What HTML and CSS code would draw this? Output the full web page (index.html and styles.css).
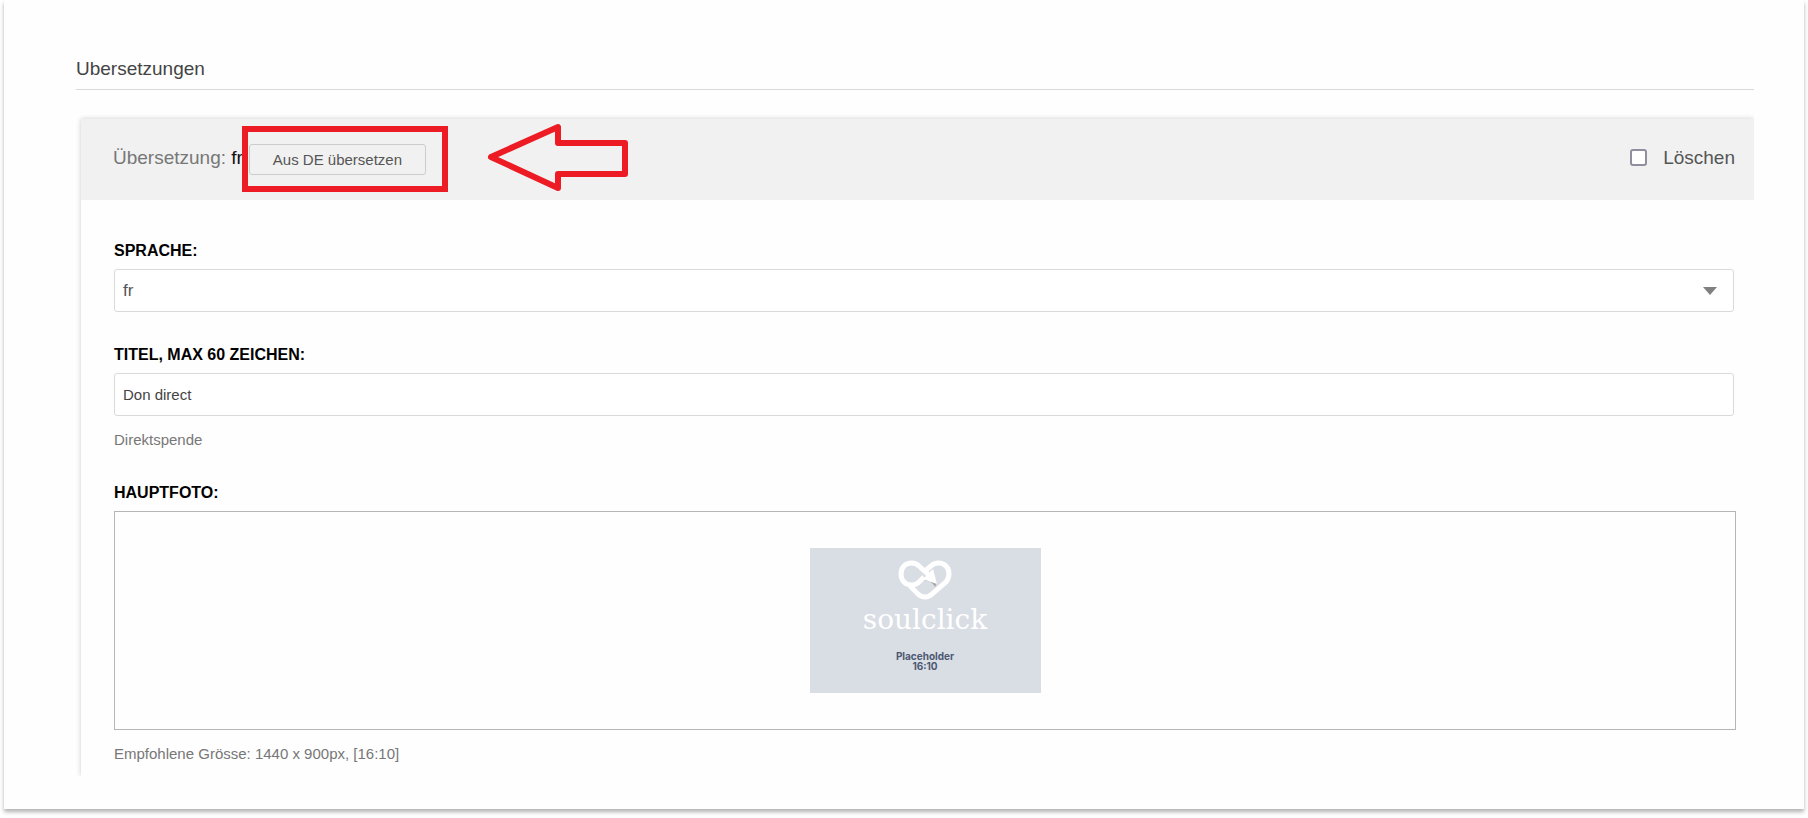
FILE: index.html
```html
<!DOCTYPE html>
<html lang="de">
<head>
    <meta charset="UTF-8">
    <meta name="viewport" content="width=device-width, initial-scale=1.0">
    <title>Übersetzungen</title>
    <link rel="stylesheet" href="styles.css">
</head>
<body>
    <main class="sheet">
        <h2 class="section-title">Ubersetzungen</h2>

        <form class="panel">
            <div class="panel-header">
                <div class="panel-title">Übersetzung: <b>fr</b></div>
                <button type="button" class="translate-btn">Aus DE übersetzen</button>
                <label class="delete-label"><input type="checkbox" class="delete-check">Löschen</label>

                <!-- Markierung -->
                <div class="highlight"></div>
                <svg class="arrow" width="144" height="70" viewBox="0 0 144 70">
                    <path d="M6 36 L73 6 V22 H140 V53 H73 V67 Z" fill="none" stroke="#ed1c24" stroke-width="6" stroke-linejoin="round"/>
                </svg>
            </div>

            <div class="panel-body">
                <div class="field">
                    <label for="language">SPRACHE:</label>
                    <div class="select-wrap">
                        <select id="language" class="control">
                            <option>fr</option>
                        </select>
                    </div>
                </div>

                <div class="field">
                    <label for="title">TITEL, MAX 60 ZEICHEN:</label>
                    <input type="text" id="title" class="control" maxlength="60" value="Don direct">
                    <p class="help">Direktspende</p>
                </div>

                <div class="field photo-field">
                    <h3>HAUPTFOTO:</h3>
                    <div class="photo-box">
                        <div class="placeholder">
                            <svg class="logo" width="54" height="42" viewBox="0 0 54 42">
                                <path d="M26 19 L21 24 C17 28 10 28 6 24 C2 20 2 12 6 8 C10 4 17 4 21 8 L33 19" fill="none" stroke="#fff" stroke-width="5"/>
                                <path d="M26 14 L33 8 C37 4 44 4 48 8 C52 12 52 19 48 24 L34 36 C30 40 24 40 20 36 L12 28" fill="none" stroke="#fff" stroke-width="5"/>
                                <path d="M25 22 C31 22 35 25 37 29 L39 25 Z" fill="#aaa7a2"/>
                                <path d="M25 21 L35 11 L39 26 Z" fill="#fff"/>
                            </svg>
                            <span class="brand">soulclick</span>
                            <span class="ratio">Placeholder<br>16:10</span>
                        </div>
                    </div>
                    <p class="help">Empfohlene Grösse: 1440 x 900px, [16:10]</p>
                </div>
            </div>
        </form>
    </main>
</body>
</html>
```
FILE: styles.css
```css
* {
    box-sizing: border-box;
}

body {
    margin: 0;
    background-color: #fff;
    color: #444;
    font-family: "Liberation Sans", Arial, sans-serif;
    font-size: 15px;
    line-height: 20px;
}

.sheet {
    margin: 0 4px 8px;
    padding: 57px 50px 33px 72px;
    background-color: #fefefe;
    box-shadow: 0 3px 4px rgba(0, 0, 0, 0.3);
}

.section-title {
    margin: 0 0 29px;
    padding-bottom: 8px;
    border-bottom: 1px solid #d9d9d9;
    font-size: 19px;
    font-weight: normal;
    line-height: 24px;
}

/* Schatten nur oben und links */
.panel {
    margin-left: 5px;
    box-shadow: 0 0 5px rgba(0, 0, 0, 0.2);
    clip-path: inset(-5px 0 0 -5px);
    background-color: #fefefe;
}

.panel-header {
    position: relative;
    display: flex;
    align-items: center;
    height: 81px;
    padding: 0 19px 0 32px;
    background-color: #f1f1f1;
    font-size: 19px;
}

.panel-title,
.delete-label {
    padding-bottom: 4px;
}

.panel-title {
    color: #777;
}

.panel-title b {
    color: #111;
    font-weight: normal;
}

.translate-btn {
    width: 177px;
    height: 31px;
    margin-left: 6px;
    border: 1px solid #ccc;
    border-radius: 3px;
    background-color: #f1f1f1;
    color: #555;
    font-family: inherit;
    font-size: 15px;
}

.delete-label {
    display: flex;
    align-items: center;
    gap: 16px;
    margin-left: auto;
    color: #555;
}

.delete-check {
    appearance: none;
    width: 17px;
    height: 17px;
    margin: 0;
    border: 2px solid #8f8f9d;
    border-radius: 3px;
    background-color: #fff;
}

.highlight {
    position: absolute;
    top: 7px;
    left: 161px;
    width: 206px;
    height: 66px;
    border: 6px solid #ed1c24;
    pointer-events: none;
}

.arrow {
    position: absolute;
    top: 2px;
    left: 404px;
}

.panel-body {
    padding: 41px 18px 12px 33px;
}

.field {
    margin-bottom: 33px;
    padding-right: 2px;
}

.photo-field {
    margin-bottom: 0;
    padding-right: 0;
}

.field label,
.field h3 {
    display: block;
    margin: 0 0 8px;
    color: #000;
    font-size: 16px;
    font-weight: bold;
    line-height: 20px;
}

.control {
    display: block;
    width: 100%;
    height: 43px;
    padding: 0 8px;
    border: 1px solid #d9d9d9;
    border-radius: 3px;
    background-color: #fff;
    color: #444;
    font-family: inherit;
    font-size: 15px;
}

.select-wrap {
    position: relative;
}

.select-wrap .control {
    appearance: none;
    color: #555;
    font-size: 17px;
}

.select-wrap::after {
    content: "";
    position: absolute;
    top: 18px;
    right: 17px;
    border: 7px solid transparent;
    border-top: 8px solid #808080;
    border-bottom: 0;
    pointer-events: none;
}

.help {
    margin: 14px 0 0;
    color: #777;
}

.photo-box {
    display: flex;
    align-items: center;
    justify-content: center;
    height: 219px;
    border: 1px solid #b5b5b5;
}

.placeholder {
    display: flex;
    flex-direction: column;
    align-items: center;
    width: 231px;
    height: 145px;
    padding-top: 10px;
    background-color: #d9dde4;
}

.brand {
    color: #fff;
    font-family: "DejaVu Serif", serif;
    font-size: 28px;
    line-height: 40px;
}

.ratio {
    margin-top: 11px;
    color: #4c5872;
    font-family: Inter, sans-serif;
    font-size: 10px;
    font-weight: bold;
    line-height: 10px;
    text-align: center;
}
```
